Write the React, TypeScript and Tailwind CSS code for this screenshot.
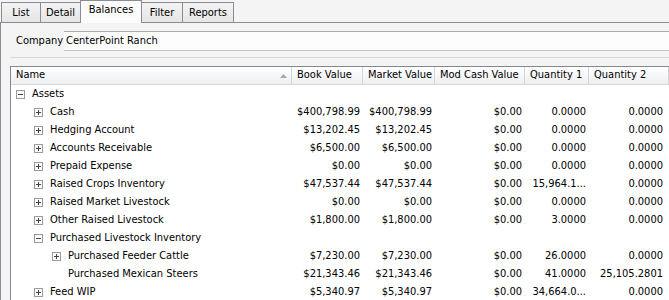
type Row = {
    level: number;
    exp?: 'plus' | 'minus';
    name: string;
    v?: string[];
};

const rows: Row[] = [
    { level: 0, exp: 'minus', name: 'Assets' },
    { level: 1, exp: 'plus', name: 'Cash', v: ['$400,798.99', '$400,798.99', '$0.00', '0.0000', '0.0000'] },
    { level: 1, exp: 'plus', name: 'Hedging Account', v: ['$13,202.45', '$13,202.45', '$0.00', '0.0000', '0.0000'] },
    { level: 1, exp: 'plus', name: 'Accounts Receivable', v: ['$6,500.00', '$6,500.00', '$0.00', '0.0000', '0.0000'] },
    { level: 1, exp: 'plus', name: 'Prepaid Expense', v: ['$0.00', '$0.00', '$0.00', '0.0000', '0.0000'] },
    { level: 1, exp: 'plus', name: 'Raised Crops Inventory', v: ['$47,537.44', '$47,537.44', '$0.00', '15,964.1...', '0.0000'] },
    { level: 1, exp: 'plus', name: 'Raised Market Livestock', v: ['$0.00', '$0.00', '$0.00', '0.0000', '0.0000'] },
    { level: 1, exp: 'plus', name: 'Other Raised Livestock', v: ['$1,800.00', '$1,800.00', '$0.00', '3.0000', '0.0000'] },
    { level: 1, exp: 'minus', name: 'Purchased Livestock Inventory' },
    { level: 2, exp: 'plus', name: 'Purchased Feeder Cattle', v: ['$7,230.00', '$7,230.00', '$0.00', '26.0000', '0.0000'] },
    { level: 2, name: 'Purchased Mexican Steers', v: ['$21,343.46', '$21,343.46', '$0.00', '41.0000', '25,105.2801'] },
    { level: 1, exp: 'plus', name: 'Feed WIP', v: ['$5,340.97', '$5,340.97', '$0.00', '34,664.0...', '0.0000'] },
];

const tabs = ['List', 'Detail', 'Balances', 'Filter', 'Reports'];
const tabWidths = ['w-[40px]', 'w-[41px]', 'w-[62px]', 'w-[42px]', 'w-[52px]'];

const cols = ['Book Value', 'Market Value', 'Mod Cash Value', 'Quantity 1', 'Quantity 2'];

const Expander = ({ kind }: { kind: 'plus' | 'minus' }) => (
    <svg width="9" height="9" viewBox="0 0 9 9" className="shrink-0">
        <rect x="0.5" y="0.5" width="8" height="8" fill="#fbfbfb" stroke="#9a9a9a" />
        <line x1="2" y1="4.5" x2="7" y2="4.5" stroke="#444" />
        {kind === 'plus' && <line x1="4.5" y1="2" x2="4.5" y2="7" stroke="#444" />}
    </svg>
);

const indents = ['pl-[5px]', 'pl-[23px]', 'pl-[41px]'];

export default function App() {
    return (
        <div className="w-[669px] h-[300px] overflow-hidden bg-[#f4f4f4] text-[11px] text-black font-['DejaVu_Sans_Condensed','DejaVu_Sans',sans-serif] flex flex-col">
            {/* Tab strip */}
            <div className="h-[23px] flex items-end shrink-0">
                <div className="w-[2px] h-px bg-[#898c95]" />
                {tabs.map((t, i) =>
                    t === 'Balances' ? (
                        <div
                            key={t}
                            className={`${tabWidths[i]} h-[23px] -ml-px bg-[#fbfbfb] border-l border-r border-t border-[#898c95] flex items-center justify-center pb-[3px] relative z-10`}
                        >
                            {t}
                        </div>
                    ) : (
                        <div
                            key={t}
                            className={`${tabWidths[i]} h-[21px] -ml-px bg-gradient-to-b from-[#f3f3f3] to-[#e6e6e6] border border-[#898c95] flex items-center justify-center pt-[1px]`}
                        >
                            {t}
                        </div>
                    )
                )}
                <div className="flex-1 h-px bg-[#898c95]" />
            </div>

            {/* Panel */}
            <div className="flex-1 border-l border-[#898c95] flex flex-col">
                <div className="flex items-center mt-[8px] h-[20px]">
                    <span className="pl-[15px] w-[63px]">Company</span>
                    <div className="flex-1 h-[20px] bg-[#fdfdfd] border-t border-b border-t-[#a9a9a9] border-b-[#c4c4c4] flex items-center pl-[2px]">
                        CenterPoint Ranch
                    </div>
                </div>

                <div className="mt-[6px] ml-[9px] border-t border-[#dadada] pt-[8px] flex-1 flex flex-col">
                    <div className="flex-1 bg-white border-l border-t border-[#828790] flex flex-col">
                        {/* Header */}
                        <div className="grid grid-cols-[281px_71px_72px_90px_64px_1fr] h-[18px] bg-gradient-to-b from-[#ffffff] to-[#eeeff1] border-b border-[#d5d5d5]">
                            <div className="flex items-center justify-between pl-[5px] pr-[4px] border-r border-[#d5d5d5]">
                                <span>Name</span>
                                <svg width="7" height="4" viewBox="0 0 7 4">
                                    <path d="M0 4 L3.5 0 L7 4 Z" fill="#a7a7a7" />
                                </svg>
                            </div>
                            {cols.map((c) => (
                                <div key={c} className="flex items-center pl-[5px] border-r border-[#d5d5d5] whitespace-nowrap overflow-hidden">
                                    {c}
                                </div>
                            ))}
                        </div>

                        {/* Rows */}
                        {rows.map((r) => (
                            <div key={r.name} className="grid grid-cols-[281px_71px_72px_90px_64px_1fr] h-[18px] items-center">
                                <div className={`flex items-center gap-[7px] ${indents[r.level]}`}>
                                    {r.exp ? <Expander kind={r.exp} /> : <span className="w-[9px]" />}
                                    <span className="whitespace-nowrap">{r.name}</span>
                                </div>
                                {(r.v ?? ['', '', '', '', '']).map((v, i) => (
                                    <div key={i} className={`text-right whitespace-nowrap ${i === 4 ? 'pr-[6px]' : 'pr-[3px]'}`}>
                                        {v}
                                    </div>
                                ))}
                            </div>
                        ))}
                    </div>
                </div>
            </div>
        </div>
    );
}
